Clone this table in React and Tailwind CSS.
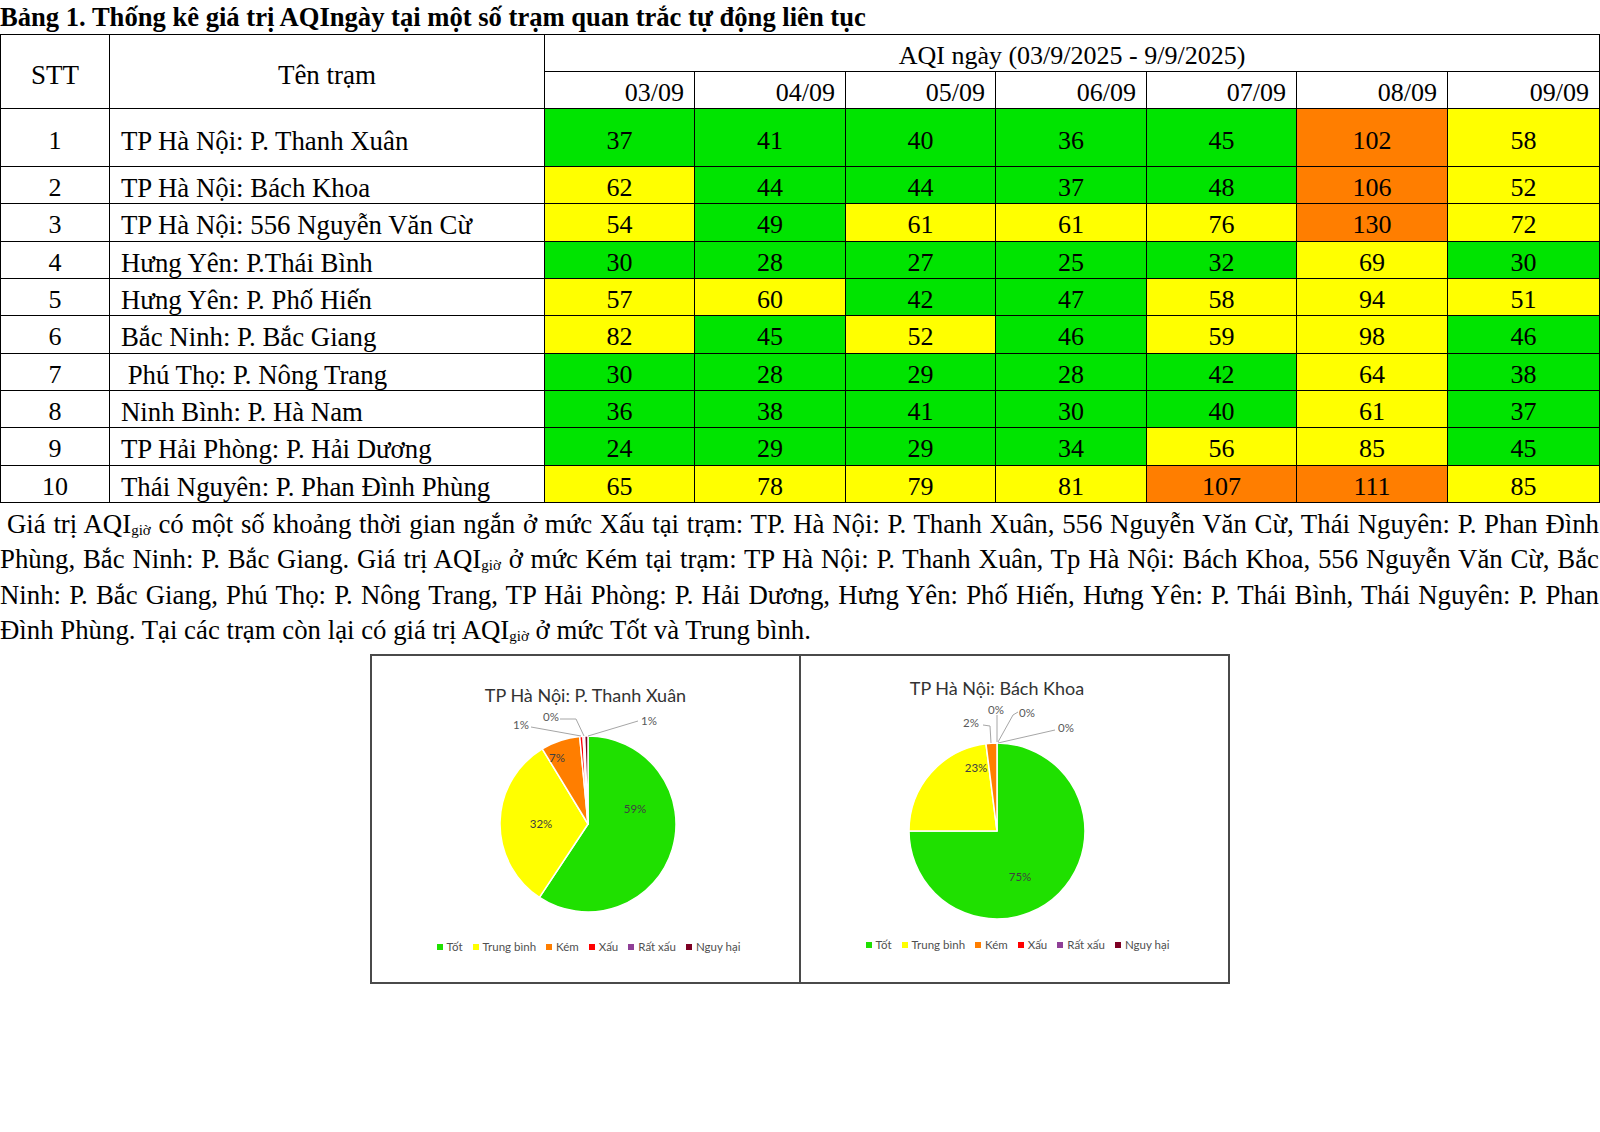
import React from 'react';

const DATES = ['03/09', '04/09', '05/09', '06/09', '07/09', '08/09', '09/09'];

const ROWS = [
  ['1', 'TP Hà Nội: P. Thanh Xuân', [37, 41, 40, 36, 45, 102, 58]],
  ['2', 'TP Hà Nội: Bách Khoa', [62, 44, 44, 37, 48, 106, 52]],
  ['3', 'TP Hà Nội: 556 Nguyễn Văn Cừ', [54, 49, 61, 61, 76, 130, 72]],
  ['4', 'Hưng Yên: P.Thái Bình', [30, 28, 27, 25, 32, 69, 30]],
  ['5', 'Hưng Yên: P. Phố Hiến', [57, 60, 42, 47, 58, 94, 51]],
  ['6', 'Bắc Ninh: P. Bắc Giang', [82, 45, 52, 46, 59, 98, 46]],
  ['7', '\u00a0Phú Thọ: P. Nông Trang', [30, 28, 29, 28, 42, 64, 38]],
  ['8', 'Ninh Bình: P. Hà Nam', [36, 38, 41, 30, 40, 61, 37]],
  ['9', 'TP Hải Phòng: P. Hải Dương', [24, 29, 29, 34, 56, 85, 45]],
  ['10', 'Thái Nguyên: P. Phan Đình Phùng', [65, 78, 79, 81, 107, 111, 85]],
];

function cellBg(v) {
  if (v <= 50) return 'bg-[#00e400]';
  if (v <= 100) return 'bg-[#ffff00]';
  return 'bg-[#ff7e00]';
}

const PIE_COLORS = ['#1fe000', '#ffff00', '#ff7e00', '#ff0000', '#8f3f97', '#7e0023'];

const LEGEND = [
  { label: 'Tốt', cls: 'bg-[#1fe000]' },
  { label: 'Trung bình', cls: 'bg-[#ffff00]' },
  { label: 'Kém', cls: 'bg-[#ff7e00]' },
  { label: 'Xấu', cls: 'bg-[#ff0000]' },
  { label: 'Rất xấu', cls: 'bg-[#8f3f97]' },
  { label: 'Nguy hại', cls: 'bg-[#7e0023]' },
];

function slicePath(cx, cy, r, a0, a1) {
  const rad = (a) => ((a - 90) * Math.PI) / 180;
  const x0 = cx + r * Math.cos(rad(a0));
  const y0 = cy + r * Math.sin(rad(a0));
  const x1 = cx + r * Math.cos(rad(a1));
  const y1 = cy + r * Math.sin(rad(a1));
  const large = a1 - a0 > 180 ? 1 : 0;
  return `M${cx},${cy} L${x0},${y0} A${r},${r} 0 ${large} 1 ${x1},${y1} Z`;
}

const CHARTS = [
  {
    title: 'TP Hà Nội: P. Thanh Xuân',
    titleCls: 'pt-[28px] pr-0',
    panelCls: 'w-[429px] border-r-2 border-[#4a4a4a]',
    legendCls: 'mt-[9px] pl-[6px]',
    left: 372,
    top: 706,
    h: 224,
    cx: 588,
    cy: 824,
    r: 88,
    values: [59.3, 32, 7.2, 0.6, 0.3, 0.6],
    inner: [
      ['59%', 635, 808],
      ['32%', 541, 823],
      ['7%', 557, 757],
    ],
    outer: [
      ['1%', 521, 724],
      ['0%', 551, 716],
      ['1%', 649, 720],
    ],
    lines: [
      '531,727 581,736',
      '560,719 576,719 584,736',
      '638,721 588,736',
    ],
  },
  {
    title: 'TP Hà Nội: Bách Khoa',
    titleCls: 'pt-[21px] pr-[35px]',
    panelCls: 'w-[427px]',
    legendCls: 'mt-[7px] pl-[6px]',
    left: 801,
    top: 699,
    h: 231,
    cx: 997,
    cy: 831,
    r: 88,
    values: [75, 23, 2, 0, 0, 0],
    inner: [
      ['75%', 1020, 876],
      ['23%', 976, 767],
    ],
    outer: [
      ['2%', 971, 722],
      ['0%', 996, 709],
      ['0%', 1027, 712],
      ['0%', 1066, 727],
    ],
    lines: [
      '983,725 990,726 991,743',
      '997,715 997,742',
      '1018,712 1013,715 998,742',
      '1055,730 998,743',
    ],
  },
];

function PieChart({ c }) {
  const total = c.values.reduce((a, b) => a + b, 0);
  let acc = 0;
  const slices = c.values.map((v, i) => {
    const a0 = (acc / total) * 360;
    acc += v;
    const a1 = (acc / total) * 360;
    if (v <= 0) return null;
    return (
      <path
        key={i}
        d={slicePath(c.cx, c.cy, c.r, a0, a1)}
        fill={PIE_COLORS[i]}
        stroke="#ffffff"
        strokeWidth="1.5"
        strokeLinejoin="round"
      />
    );
  });
  return (
    <div className={`flex flex-col items-stretch h-full ${c.panelCls}`}>
      <div
        className={`${c.titleCls} text-center text-[18px] leading-[22px] text-[#333333] font-['Lato',sans-serif]`}
      >
        {c.title}
      </div>
      <svg
        width="427"
        height={c.h}
        viewBox={`${c.left} ${c.top} 427 ${c.h}`}
        className="block"
      >
        {slices}
        {c.lines.map((p, i) => (
          <polyline key={i} points={p} fill="none" stroke="#a6a6a6" strokeWidth="1" />
        ))}
        {c.inner.map(([t, x, y], i) => (
          <text
            key={i}
            x={x}
            y={y}
            textAnchor="middle"
            dominantBaseline="central"
            fontFamily="Lato, sans-serif"
            fontSize="11.5"
            fill="#404040"
          >
            {t}
          </text>
        ))}
        {c.outer.map(([t, x, y], i) => (
          <text
            key={i}
            x={x}
            y={y}
            textAnchor="middle"
            dominantBaseline="central"
            fontFamily="Lato, sans-serif"
            fontSize="11.5"
            fill="#595959"
          >
            {t}
          </text>
        ))}
      </svg>
      <div
        className={`${c.legendCls} flex justify-center items-center gap-[10px] text-[11.5px] leading-[16px] text-[#505050] font-['Lato',sans-serif]`}
      >
        {LEGEND.map((l) => (
          <div key={l.label} className="flex items-center gap-[4px]">
            <span className={`inline-block w-[6px] h-[6px] ${l.cls}`} />
            <span>{l.label}</span>
          </div>
        ))}
      </div>
    </div>
  );
}

function Sub() {
  return <sub className="text-[15px] align-baseline relative top-[2px] leading-none">giờ</sub>;
}

export default function App() {
  return (
    <div className="w-[1600px] h-[1132px] bg-white text-black font-['Liberation_Serif','Times_New_Roman',serif] overflow-hidden">
      <div className="h-[34px] pt-[2px] leading-[30px] text-[26.6px] font-bold whitespace-nowrap">
        Bảng 1. Thống kê giá trị AQIngày tại một số trạm quan trắc tự động liên tục
      </div>
      <table className="w-[1599px] table-fixed border-collapse text-[26px] leading-[30px]">
        <colgroup>
          <col className="w-[109px]" />
          <col className="w-[435px]" />
          <col className="w-[150px]" />
          <col className="w-[151px]" />
          <col className="w-[150px]" />
          <col className="w-[151px]" />
          <col className="w-[150px]" />
          <col className="w-[151px]" />
          <col className="w-[152px]" />
        </colgroup>
        <thead>
          <tr className="h-[37px]">
            <th rowSpan={2} className="border border-black font-normal text-center align-middle pt-[6px] p-0 text-[27px]">
              STT
            </th>
            <th rowSpan={2} className="border border-black font-normal text-center align-middle pt-[6px] p-0 text-[27px]">
              Tên trạm
            </th>
            <th colSpan={7} className="border border-black font-normal text-center align-middle pt-[6px] p-0">
              AQI ngày (03/9/2025 - 9/9/2025)
            </th>
          </tr>
          <tr className="h-[37px]">
            {DATES.map((d) => (
              <th
                key={d}
                className="border border-black font-normal text-right align-middle pt-[6px] pr-[10px] p-0"
              >
                {d}
              </th>
            ))}
          </tr>
        </thead>
        <tbody>
          {ROWS.map(([n, name, vals], ri) => (
            <tr key={n} className={ri === 0 ? 'h-[58px]' : 'h-[37.33px]'}>
              <td className="border border-black text-center align-middle pt-[6px] p-0">{n}</td>
              <td className="border border-black text-left align-middle pt-[6px] pl-[11px] p-0 whitespace-pre text-[26.8px]">
                {name}
              </td>
              {vals.map((v, i) => (
                <td
                  key={i}
                  className={`border border-black text-center align-middle pt-[6px] p-0 ${cellBg(v)}`}
                >
                  {v}
                </td>
              ))}
            </tr>
          ))}
        </tbody>
      </table>
      <div className="mt-[4px] w-[1599px] text-[26.8px] leading-[35.3px]">
        <div className="text-justify [text-align-last:justify] pl-[7px] whitespace-nowrap">
          Giá trị AQI<Sub /> có một số khoảng thời gian ngắn ở mức Xấu tại trạm: TP. Hà Nội: P. Thanh Xuân, 556
          Nguyễn Văn Cừ, Thái Nguyên: P. Phan Đình
        </div>
        <div className="text-justify [text-align-last:justify] whitespace-nowrap">
          Phùng, Bắc Ninh: P. Bắc Giang. Giá trị AQI<Sub /> ở mức Kém tại trạm: TP Hà Nội: P. Thanh Xuân, Tp Hà Nội:
          Bách Khoa, 556 Nguyễn Văn Cừ, Bắc
        </div>
        <div className="text-justify [text-align-last:justify] whitespace-nowrap">
          Ninh: P. Bắc Giang, Phú Thọ: P. Nông Trang, TP Hải Phòng: P. Hải Dương, Hưng Yên: Phố Hiến, Hưng Yên: P.
          Thái Bình, Thái Nguyên: P. Phan
        </div>
        <div className="text-left whitespace-nowrap">
          Đình Phùng. Tại các trạm còn lại có giá trị AQI<Sub /> ở mức Tốt và Trung bình.
        </div>
      </div>
      <div className="mt-[6px] mx-auto w-[860px] h-[330px] border-2 border-[#4a4a4a] flex bg-white">
        <PieChart c={CHARTS[0]} />
        <PieChart c={CHARTS[1]} />
      </div>
    </div>
  );
}
